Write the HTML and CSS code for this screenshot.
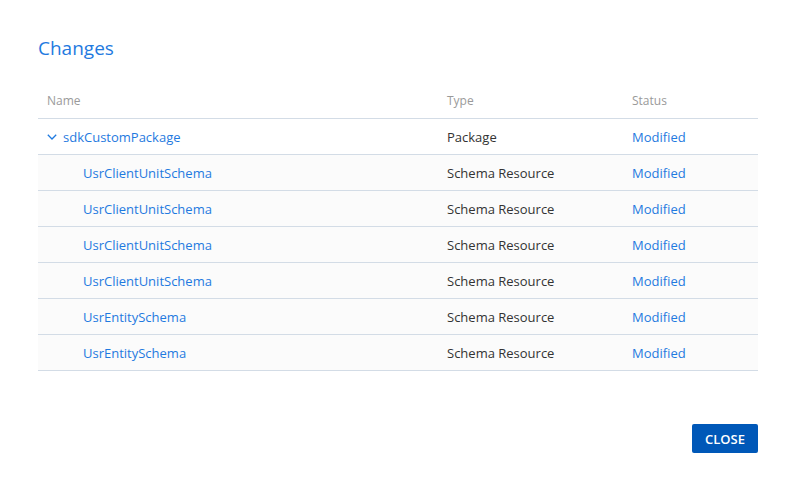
FILE: index.html
```html
<!DOCTYPE html>
<html>
<head>
<meta charset="utf-8">
<link rel="stylesheet" href="styles.css">
</head>
<body>
<div class="dialog">
  <h1 class="title">Changes</h1>
  <div class="table">
    <div class="row head">
      <div class="c-name">Name</div>
      <div class="c-type">Type</div>
      <div class="c-status">Status</div>
    </div>
    <div class="row">
      <div class="c-name pkg"><svg class="chev" width="10" height="6" viewBox="0 0 10 6"><path d="M0.8 0.8 L5 5 L9.2 0.8" fill="none" stroke="#1f7ae0" stroke-width="1.3"/></svg><span class="link">sdkCustomPackage</span></div>
      <div class="c-type">Package</div>
      <div class="c-status link">Modified</div>
    </div>
    <div class="row child">
      <div class="c-name link indent">UsrClientUnitSchema</div>
      <div class="c-type">Schema Resource</div>
      <div class="c-status link">Modified</div>
    </div>
    <div class="row child">
      <div class="c-name link indent">UsrClientUnitSchema</div>
      <div class="c-type">Schema Resource</div>
      <div class="c-status link">Modified</div>
    </div>
    <div class="row child">
      <div class="c-name link indent">UsrClientUnitSchema</div>
      <div class="c-type">Schema Resource</div>
      <div class="c-status link">Modified</div>
    </div>
    <div class="row child">
      <div class="c-name link indent">UsrClientUnitSchema</div>
      <div class="c-type">Schema Resource</div>
      <div class="c-status link">Modified</div>
    </div>
    <div class="row child">
      <div class="c-name link indent">UsrEntitySchema</div>
      <div class="c-type">Schema Resource</div>
      <div class="c-status link">Modified</div>
    </div>
    <div class="row child">
      <div class="c-name link indent">UsrEntitySchema</div>
      <div class="c-type">Schema Resource</div>
      <div class="c-status link">Modified</div>
    </div>
  </div>
  <div class="footer">
    <button class="btn">CLOSE</button>
  </div>
</div>
</body>
</html>
```
FILE: styles.css
```css
html, body {
  margin: 0;
  padding: 0;
  background: #ffffff;
}
body {
  font-family: "Open Sans", "Noto Sans", sans-serif;
  font-size: 13px;
  color: #333333;
}
.dialog {
  padding: 34px 38px 0 38px;
  width: 720px;
}
.title {
  margin: 0;
  font-size: 19px;
  font-weight: 400;
  color: #1f7ae0;
  line-height: 28px;
  height: 28px;
}
.table {
  margin-top: 25px;
}
.row {
  display: flex;
  align-items: center;
  height: 35px;
  border-bottom: 1px solid #d3dce6;
}
.row.head {
  height: 26px;
  align-items: flex-start;
  padding-top: 5px;
  color: #9a9a9a;
  font-size: 12px;
  line-height: 18px;
}
.row.child {
  background: #fbfbfb;
}
.c-name {
  width: 400px;
  padding-left: 9px;
  display: flex;
  align-items: center;
}
.c-name.indent {
  padding-left: 45px;
  width: 364px;
}
.c-type {
  width: 185px;
}
.c-status {
  flex: 1;
}
.link {
  color: #1f7ae0;
}
.chev {
  margin-right: 6px;
  margin-top: 1px;
}
.footer {
  display: flex;
  justify-content: flex-end;
  margin-top: 53px;
}
.btn {
  background: #0058b8;
  color: #ffffff;
  border: none;
  border-radius: 2px;
  width: 66px;
  height: 29px;
  font-family: "Open Sans", "Noto Sans", sans-serif;
  font-size: 13px;
  font-weight: 600;
  padding: 0;
}
```
